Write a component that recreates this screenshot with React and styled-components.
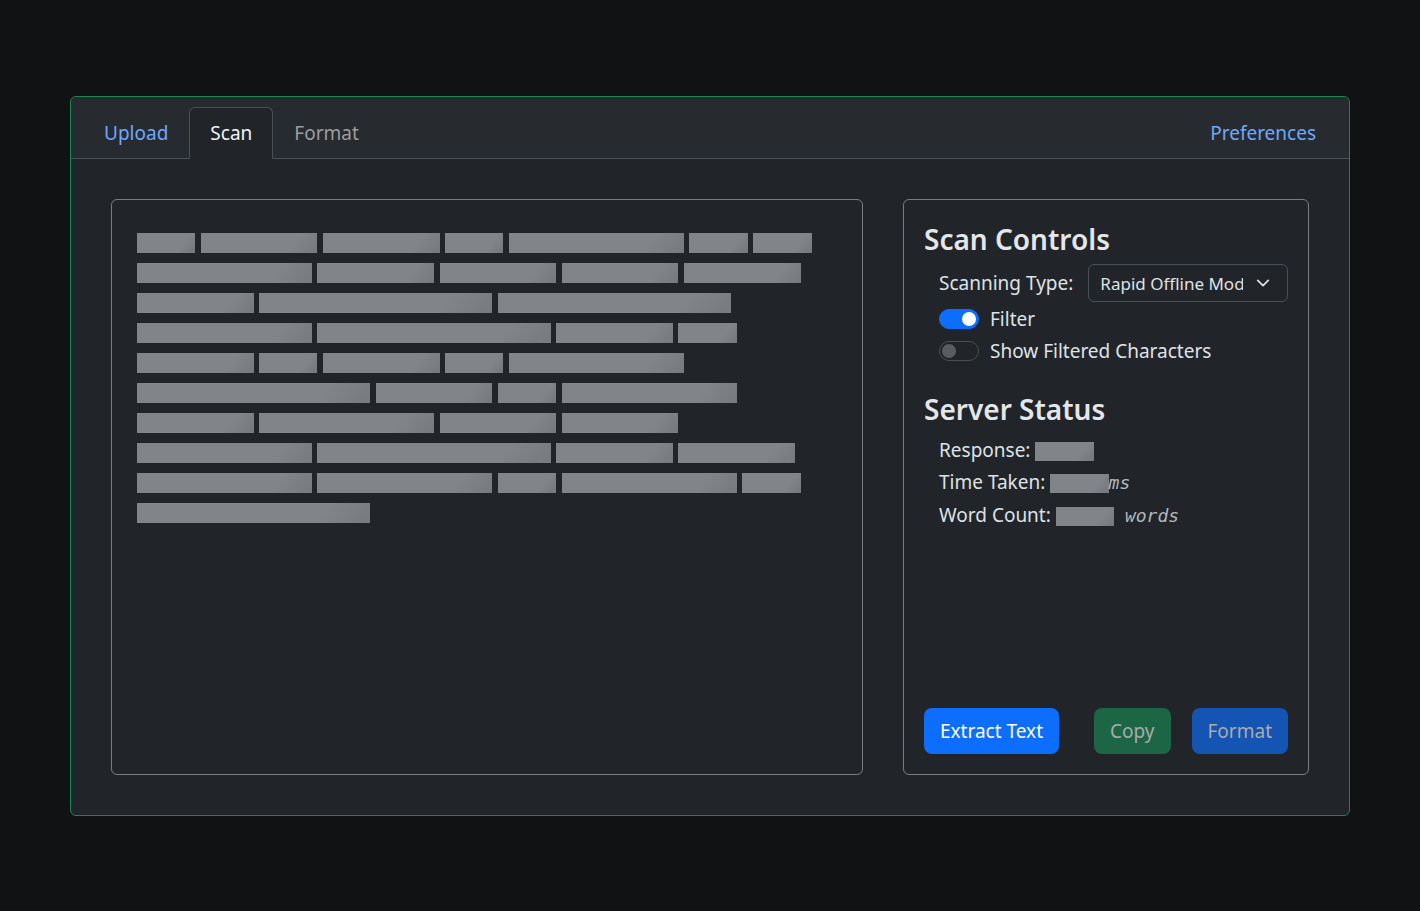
import React from 'react'
import styled, { createGlobalStyle, css } from 'styled-components'

const GlobalStyle = createGlobalStyle`
  html, body {
    margin: 0;
    padding: 0;
    background: #111213;
  }
  body {
    font-family: 'Noto Sans', 'Open Sans', sans-serif;
    color: #dee2e6;
  }
`

const Page = styled.div`
  display: flex;
  align-items: center;
  justify-content: center;
  min-height: 100vh;
`

const Card = styled.section`
  width: 1280px;
  box-sizing: border-box;
  background: #212529;
  border: 1px solid #198754;
  border-radius: 6px;
`

const CardHeader = styled.header`
  display: flex;
  align-items: flex-end;
  justify-content: space-between;
  padding: 10px 12px 0;
  background: #272b2f;
  border-bottom: 1px solid #495057;
  border-radius: 6px 6px 0 0;
`

const Tabs = styled.nav`
  display: flex;
  margin-bottom: -1px;
`

const Tab = styled.a`
  padding: 10px 20px;
  font-size: 19px;
  line-height: 30px;
  color: ${p => p.$disabled ? '#9a9ea2' : '#6ea8fe'};
  border: 1px solid transparent;
  border-radius: 6px 6px 0 0;
  cursor: pointer;

  ${p => p.$active && css`
    color: #f1f3f5;
    background: #212529;
    border-color: #495057 #495057 #212529;
  `}
`

const CardBody = styled.div`
  display: grid;
  grid-template-columns: 752px 406px;
  gap: 40px;
  padding: 40px;
`

const Panel = styled.div`
  box-sizing: border-box;
  border: 1px solid #797d82;
  border-radius: 6px;
`

const TextArea = styled(Panel)`
  height: 576px;
  padding: 33px 25px;
  display: flex;
  flex-direction: column;
  gap: 10px;
`

const Line = styled.div`
  display: flex;
  gap: 5.5px;
`

const Placeholder = styled.span`
  display: inline-block;
  width: ${p => (p.$span || 1) * 58.33}px;
  height: ${p => p.$h || 20}px;
  vertical-align: middle;
  background: linear-gradient(130deg, #818589 55%, #6e7276 75%, #818589 95%);
  background-size: 200% 100%;
  background-position: 30% 0;
`

const Controls = styled(Panel)`
  display: flex;
  flex-direction: column;
  padding: 23px 20px 20px;
`

const Heading = styled.h3`
  margin: ${p => p.$top || 0}px 0 ${p => p.$bottom ?? 5}px;
  font-size: 28px;
  font-weight: 600;
  line-height: 1.2;
  color: #e4e7ea;
`

const Fields = styled.div`
  display: flex;
  flex-direction: column;
  gap: 2px;
  padding-left: 15px;
`

const SelectRow = styled.div`
  display: flex;
  align-items: center;
  gap: 15px;
  margin-top: 3px;
  font-size: 19px;
`

const Select = styled.div`
  position: relative;
  flex: 1;
  height: 38px;
  box-sizing: border-box;
  padding: 0 44px 0 11px;
  display: flex;
  align-items: center;
  font-size: 17px;
  white-space: nowrap;
  overflow: hidden;
  border: 1px solid #495057;
  border-radius: 6px;
  background: #212529;

  svg {
    position: absolute;
    right: 17px;
    top: 13px;
  }
`

const SelectText = styled.span`
  overflow: hidden;
`

const SwitchRow = styled.label`
  display: flex;
  align-items: center;
  gap: 11px;
  height: 30px;
  font-size: 19px;
`

const Switch = styled.span`
  position: relative;
  width: 40px;
  height: 20px;
  box-sizing: border-box;
  border-radius: 10px;
  border: 1px solid ${p => p.$on ? '#0d6efd' : '#4b4f53'};
  background: ${p => p.$on ? '#0d6efd' : '#212529'};

  &::after {
    content: '';
    position: absolute;
    top: 2px;
    left: ${p => p.$on ? '22px' : '2px'};
    width: 14px;
    height: 14px;
    border-radius: 50%;
    background: ${p => p.$on ? '#ffffff' : '#595c60'};
  }
`

const Status = styled.div`
  display: flex;
  flex-direction: column;
  gap: 2px;
  padding-left: 15px;
  margin-top: 5px;
`

const StatusRow = styled.div`
  font-size: 19px;
  line-height: 30px;
  white-space: pre;
`

const Unit = styled.span`
  font-family: 'DejaVu Sans Mono', 'Liberation Mono', monospace;
  font-style: italic;
  font-size: 18px;
  color: #b3b8be;
`

const Actions = styled.div`
  display: flex;
  justify-content: space-between;
  margin-top: auto;
`

const Group = styled.div`
  display: flex;
  gap: 21px;
`

const Button = styled.button`
  height: 46px;
  padding: 0 16px;
  font-family: inherit;
  font-size: 19px;
  border: none;
  border-radius: 8px;
  color: ${p => p.disabled ? '#a9abad' : '#ffffff'};
  background: ${p => p.$variant === 'success' ? '#1c6545' : p.disabled ? '#1454b3' : '#0d6efd'};
  cursor: pointer;
`

const lines = [
  [1, 2, 2, 1, 3, 1, 1],
  [3, 2, 2, 2, 2],
  [2, 4, 4],
  [3, 4, 2, 1],
  [2, 1, 2, 1, 3],
  [4, 2, 1, 3],
  [2, 3, 2, 2],
  [3, 4, 2, 2],
  [3, 3, 1, 3, 1],
  [4],
]

const Chevron = () => (
  <svg width="14" height="10" viewBox="0 0 16 10" fill="none" stroke="#dee2e6" strokeWidth="2" strokeLinecap="round" strokeLinejoin="round">
    <path d="M2 2l6 6 6-6" />
  </svg>
)

const App = () => (
  <Page>
    <GlobalStyle />
    <Card>
      <CardHeader>
        <Tabs>
          <Tab>Upload</Tab>
          <Tab $active>Scan</Tab>
          <Tab $disabled>Format</Tab>
        </Tabs>
        <Tabs>
          <Tab>Preferences</Tab>
        </Tabs>
      </CardHeader>
      <CardBody>
        <TextArea>
          {lines.map((spans, i) => (
            <Line key={i}>
              {spans.map((s, j) => <Placeholder key={j} $span={s} />)}
            </Line>
          ))}
        </TextArea>
        <Controls>
          <Heading>Scan Controls</Heading>
          <Fields>
            <SelectRow>
              <span>Scanning Type:</span>
              <Select>
                <SelectText>Rapid Offline Mode</SelectText>
                <Chevron />
              </Select>
            </SelectRow>
            <SwitchRow><Switch $on />Filter</SwitchRow>
            <SwitchRow><Switch />Show Filtered Characters</SwitchRow>
          </Fields>
          <Heading $top={27} $bottom={3}>Server Status</Heading>
          <Status>
            <StatusRow>Response: <Placeholder $h={19} /></StatusRow>
            <StatusRow>Time Taken: <Placeholder $h={19} /><Unit>ms</Unit></StatusRow>
            <StatusRow>Word Count: <Placeholder $h={19} /><Unit> words</Unit></StatusRow>
          </Status>
          <Actions>
            <Button>Extract Text</Button>
            <Group>
              <Button $variant="success" disabled>Copy</Button>
              <Button disabled>Format</Button>
            </Group>
          </Actions>
        </Controls>
      </CardBody>
    </Card>
  </Page>
)

export default App
